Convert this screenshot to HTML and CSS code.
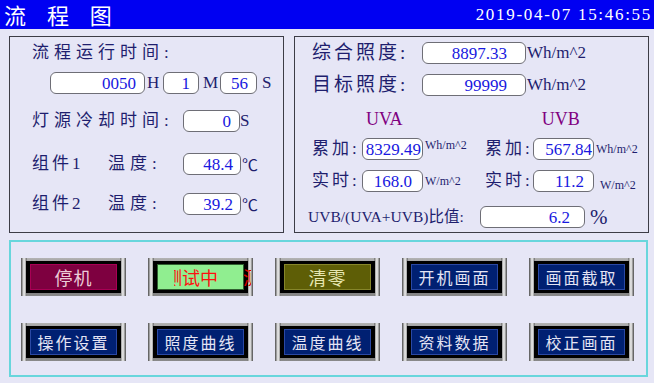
FILE: index.html
```html
<!DOCTYPE html>
<html lang="zh-CN">
<head>
<meta charset="utf-8">
<title>流程图</title>
<link rel="stylesheet" href="styles.css">
</head>
<body>
<div class="screen">
  <header class="top">
    <span class="title">流 程 图</span>
    <span class="clock">2019-04-07 15:46:55</span>
  </header>

  <div class="panels">
    <section class="panel left">
      <div class="row l1"><span class="lbl">流程运行时间:</span></div>
      <div class="row l2">
        <span class="box w95">0050</span><span class="u uh">H</span>
        <span class="box w36">1</span><span class="u um">M</span>
        <span class="box w37">56</span><span class="u us">S</span>
      </div>
      <div class="row l3"><span class="lbl wl">灯源冷却时间:</span><span class="box w57">0</span><span class="u">S</span></div>
      <div class="row l4"><span class="lbl wa">组件1</span><span class="lbl wb">温度:</span><span class="box w58 p7">48.4</span><span class="u deg">℃</span></div>
      <div class="row l5"><span class="lbl wa">组件2</span><span class="lbl wb">温度:</span><span class="box w58 p7">39.2</span><span class="u deg">℃</span></div>
    </section>

    <section class="panel right">
      <div class="row r1"><span class="lbl big wr">综合照度:</span><span class="box w104 p18">8897.33</span><span class="u unit">Wh/m^2</span></div>
      <div class="row r2"><span class="lbl big wr">目标照度:</span><span class="box w104 p18">99999</span><span class="u unit">Wh/m^2</span></div>
      <div class="row r3"><span class="uv uva">UVA</span><span class="uv uvb">UVB</span></div>
      <div class="grid r4">
        <span class="lbl sm">累加:</span><span class="box p1">8329.49</span><span class="u small up">Wh/m^2</span>
        <span class="lbl sm">累加:</span><span class="box p1">567.84</span><span class="u small mid">Wh/m^2</span>
      </div>
      <div class="grid r5">
        <span class="lbl sm">实时:</span><span class="box p10">168.0</span><span class="u small mid">W/m^2</span>
        <span class="lbl sm">实时:</span><span class="box p9">11.2</span><span class="u small down">W/m^2</span>
      </div>
      <div class="row r6"><span class="lbl ratio">UVB/(UVA+UVB)比值:</span><span class="box w105 p14">6.2</span><span class="u pct">%</span></div>
    </section>
  </div>

  <section class="controls">
    <div class="btn"><div class="btn-in"><div class="face stop">停机</div></div></div>
    <div class="btn"><div class="btn-in"><div class="face test"><span class="clipr"><span>测</span></span>试中</div></div><span class="frag">测</span></div>
    <div class="btn"><div class="btn-in"><div class="face clear">清零</div></div></div>
    <div class="btn"><div class="btn-in"><div class="face navy">开机画面</div></div></div>
    <div class="btn"><div class="btn-in"><div class="face navy">画面截取</div></div></div>
    <div class="btn"><div class="btn-in"><div class="face navy">操作设置</div></div></div>
    <div class="btn"><div class="btn-in"><div class="face navy">照度曲线</div></div></div>
    <div class="btn"><div class="btn-in"><div class="face navy">温度曲线</div></div></div>
    <div class="btn"><div class="btn-in"><div class="face navy">资料数据</div></div></div>
    <div class="btn"><div class="btn-in"><div class="face navy">校正画面</div></div></div>
  </section>
</div>
</body>
</html>
```

FILE: styles.css
```css
* { box-sizing: border-box; }
html, body { margin: 0; padding: 0; }
body {
  width: 654px;
  height: 383px;
  overflow: hidden;
  background: #e6e6f6;
  font-family: "Liberation Serif", "Noto Sans CJK SC", serif;
  color: #1e1e6e;
}
.screen { width: 654px; height: 383px; }

/* header */
.top {
  height: 29px;
  background: #0000f2;
  color: #ffffff;
  display: flex;
  align-items: center;
  justify-content: space-between;
  padding: 0 2px 0 4px;
}
.title {
  font-family: "Noto Sans CJK SC", sans-serif;
  font-size: 22px;
  letter-spacing: 8px;
  line-height: 29px;
}
.clock {
  font-family: "Liberation Serif", serif;
  font-size: 17px;
  letter-spacing: 1.7px;
  line-height: 29px;
}

/* panels */
.panels {
  display: flex;
  gap: 10px;
  padding: 7px 0 0 9px;
}
.panel {
  border: 1px solid #3c3c46;
  height: 197px;
}
.left { width: 275px; padding-top: 5px; }
.right { width: 355px; padding-top: 5px; }

.row { display: flex; align-items: center; height: 22px; }
.lbl {
  font-size: 17px;
  letter-spacing: 5px;
  line-height: 22px;
  white-space: nowrap;
  color: #1e1e6e;
}
.box {
  display: inline-block;
  height: 22px;
  background: #ffffff;
  border: 1px solid #6e6e76;
  border-radius: 6px;
  text-align: right;
  padding-right: 8px;
  font-family: "Liberation Serif", serif;
  font-size: 17px;
  line-height: 21px;
  color: #1818e0;
  white-space: nowrap;
}
.u {
  font-family: "Liberation Serif", serif;
  font-size: 17px;
  color: #1e1e6e;
  line-height: 22px;
}

/* left panel rows */
.l1 { padding-left: 22px; }
.l2 { margin-top: 8px; padding-left: 40px; }
.l3 { margin-top: 16px; padding-left: 22px; }
.l4 { margin-top: 21px; padding-left: 22px; }
.l5 { margin-top: 18px; padding-left: 22px; }
.w95 { width: 95px; }
.w36 { width: 36px; }
.w37 { width: 37px; }
.w57 { width: 57px; }
.w58 { width: 58px; }
.w104 { width: 104px; }
.w105 { width: 105px; }
.p7 { padding-right: 7px; }
.p18 { padding-right: 18px; }
.p14 { padding-right: 14px; }
.p10 { padding-right: 10px; }
.p9 { padding-right: 9px; }
.p1 { padding-right: 1px; }
.uh { width: 18px; padding-left: 2px; }
.um { width: 21px; padding-left: 4px; }
.us { padding-left: 5px; }
.wl { width: 151px; }
.wa { width: 76px; letter-spacing: 3px; }
.wb { width: 75px; }
.deg { font-family: "Noto Sans CJK SC", sans-serif; font-size: 16px; padding-left: 1px; }

/* right panel rows */
.r1 { padding-left: 17px; }
.r2 { margin-top: 10px; padding-left: 17px; }
.big { font-size: 19px; letter-spacing: 3px; }
.wr { width: 110px; }
.unit { padding-left: 1px; }
.r3 { margin-top: 13px; height: 20px; }
.uv {
  font-family: "Liberation Serif", serif;
  font-size: 18px;
  color: #800080;
  text-align: center;
  line-height: 20px;
}
.uva { width: 180px; }
.uvb { width: 176px; }
.grid {
  display: grid;
  grid-template-columns: 50px 61px 62px 48px 61px auto;
  height: 22px;
  padding-left: 17px;
}
.r4 { margin-top: 9px; }
.r5 { margin-top: 10px; }
.sm { font-size: 17px; letter-spacing: 3px; }
.small { font-size: 12px; line-height: 14px; padding-left: 2px; }
.up { align-self: start; }
.mid { align-self: center; }
.down { align-self: end; padding-left: 6px; }
.r6 { margin-top: 14px; padding-left: 13px; }
.ratio { width: 172px; font-size: 15.5px; letter-spacing: 0; }
.pct { font-size: 21px; padding-left: 5px; }

/* controls */
.controls {
  margin: 7px 0 0 9px;
  width: 639px;
  height: 137px;
  border: 2px solid #68d6dc;
  padding: 16px 0 0 10px;
  display: grid;
  grid-template-columns: repeat(5, 105px);
  column-gap: 22px;
  row-gap: 27px;
  align-content: start;
}
.btn {
  position: relative;
  width: 105px;
  height: 38px;
  padding: 3px 5px;
  background:
    linear-gradient(to right, #4a4a4a 0, #f4f4f4 3px, #6a6a6a 6px, rgba(0,0,0,0) 6px,
      rgba(0,0,0,0) calc(100% - 6px), #6a6a6a calc(100% - 6px), #f4f4f4 calc(100% - 3px), #4a4a4a 100%),
    linear-gradient(#b4b4b4, #5a5a5a 50%, #8a8a8a);
}
.btn-in {
  height: 100%;
  background: #000000;
  padding: 3px 4px;
}
.face {
  height: 100%;
  display: flex;
  align-items: center;
  justify-content: center;
  font-family: "Noto Sans CJK SC", sans-serif;
  font-size: 17px;
  line-height: 1;
  white-space: nowrap;
  overflow: hidden;
}
.stop { background: #7e0040; border: 1px solid #a80054; color: #ecccd8; font-size: 18px; letter-spacing: 1px; }
.test { background: #90ee90; border: 1px solid #306030; color: #ff1010; font-size: 18px; justify-content: flex-start; padding-left: 16px; }
.clear { background: #5e5e06; border: 1px solid #86862a; color: #e6e6b0; font-size: 18px; letter-spacing: 1px; }
.navy { background: #002072; border: 1px solid #2a48a4; color: #e4e4f4; font-size: 16px; letter-spacing: 2px; }
.clipr { display: inline-block; width: 8px; overflow: hidden; }
.clipr > span { display: inline-block; margin-left: -10px; }
.frag {
  position: absolute;
  left: 95px;
  top: 10px;
  width: 8px;
  overflow: hidden;
  font-family: "Noto Sans CJK SC", sans-serif;
  font-size: 18px;
  line-height: 18px;
  color: #e00000;
  white-space: nowrap;
}
```
